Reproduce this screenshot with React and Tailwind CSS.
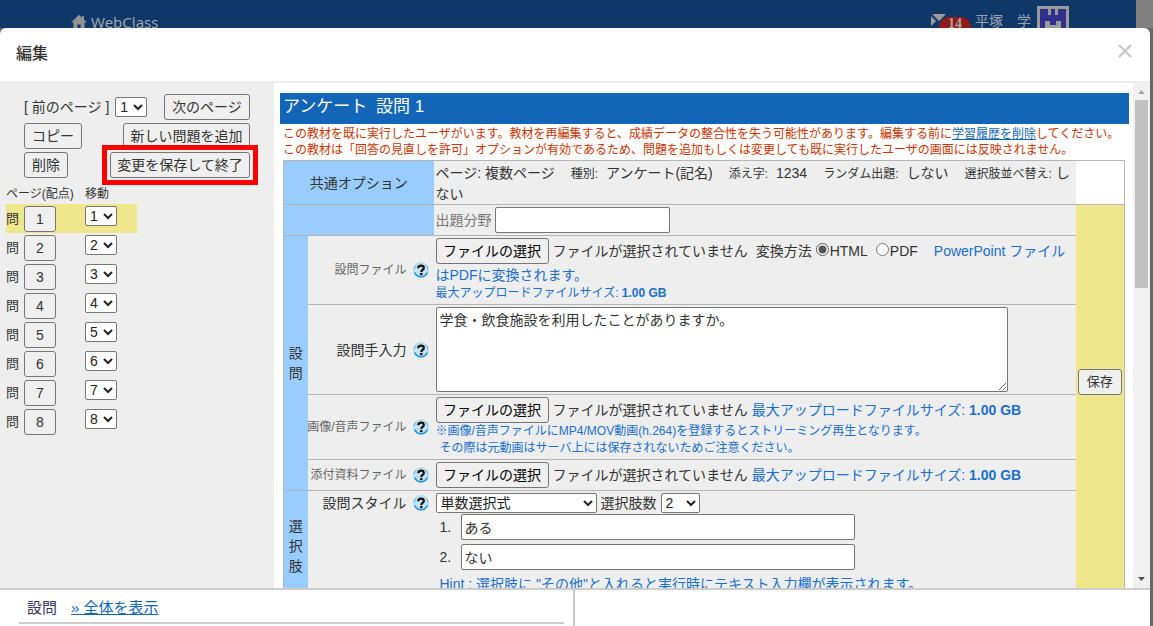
import React, { useState } from 'react';

const PAGES = [1, 2, 3, 4, 5, 6, 7, 8];
const NO_FILE = 'ファイルが選択されていません';

const buttonClass = 'h-[26px] shrink-0 rounded-[3px] border border-[#767676] bg-[#efefef] text-center whitespace-nowrap';
const selectClass = 'h-5 shrink-0 rounded-[2px] border border-[#767676] bg-white text-[#222]';
const inputClass = 'h-[26px] rounded-[2px] border border-[#767676] bg-white px-[3px]';

function HelpIcon() {
  return (
    <svg viewBox="0 0 16 16" className="h-4 w-4 shrink-0" aria-hidden="true">
      <circle cx="8" cy="8" r="7.4" fill="#c3e4f5" stroke="#b5d4e4" strokeWidth="1" />
      <path d="M1.6 10.5A7 7 0 0 0 14.4 10.5" fill="none" stroke="#2b9bd8" strokeWidth="1.8" />
      <path d="M1.2 7A7 7 0 0 1 3.4 2.8M14.8 7a7 7 0 0 0-2.2-4.2" fill="none" stroke="#5db4de" strokeWidth="1" />
      <path d="M5.2 6.3C5.3 4.4 6.4 3.6 8 3.6s2.8.9 2.8 2.3c0 2-2.5 2-2.5 4" fill="none" stroke="#111" strokeWidth="2.2" />
      <rect x="7.1" y="10.9" width="2.3" height="2.2" fill="#111" />
    </svg>
  );
}

function TopBar() {
  return (
    <header className="flex h-7 shrink-0 bg-[#808080]">
      <div className="mr-[17px] flex h-full flex-1 items-start justify-between overflow-hidden bg-[#0f3869] pr-[67px] pl-[71px] text-[#9aa3ad]">
        <a href="#home" className="mt-3 flex items-center gap-1 font-['Noto_Sans'] text-[15px] leading-5">
          <svg viewBox="0 0 16 16" className="h-4 w-4" fill="#929292" aria-hidden="true">
            <path d="M8 0.8 0 8.6h2.4V15h4v-4.6h3.2V15h4V8.6H16L13 5.7V2h-2v1.8z" />
          </svg>
          WebClass
        </a>
        <div className="flex items-start">
          <div className="mt-[14px] flex">
            <svg viewBox="0 0 16 14" className="h-[14px] w-4" aria-hidden="true">
              <path d="M1 0h14L8 7zM0 2l5 5-5 5z" fill="#9a9a9a" />
            </svg>
            <span className="-ml-2 mt-[3px] h-5 w-8 rounded-full bg-[#8f1a17] text-center font-['Liberation_Serif'] text-sm leading-[14px] font-bold text-[#a5a5a5]">14</span>
          </div>
          <span className="mt-[11px] ml-1 text-sm leading-5">平塚　学</span>
          <svg viewBox="0 0 32 32" className="mt-1.5 ml-1.5 h-8 w-8" aria-hidden="true">
            <rect width="32" height="32" fill="#9a9a9a" />
            <path d="M3 3h8v6h3V3h4v6h3V3h8v26H3z" fill="#2f2f8e" />
            <path d="M8 15h5v4h6v-4h5v14h-4v-6h-8v6H8z" fill="#9a9a9a" />
          </svg>
        </div>
      </div>
    </header>
  );
}

function Sidebar() {
  const [current, setCurrent] = useState(1);

  return (
    <aside className="w-[274px] shrink-0 bg-[#eee] text-sm leading-5">
      <div className="flex w-[250px] flex-col gap-[3px] pt-[11px] pl-6">
        <div className="flex items-center">
          <span>[ 前のページ ]</span>
          <select
            aria-label="ページ"
            value={current}
            onChange={(e) => setCurrent(Number(e.target.value))}
            className={`${selectClass} ml-1.5 w-8`}
          >
            {PAGES.map(page => <option key={page} value={page}>{page}</option>)}
          </select>
          <button className={`${buttonClass} ml-auto w-[86px]`}>次のページ</button>
        </div>
        <div className="flex justify-between">
          <button className={`${buttonClass} w-[58px]`}>コピー</button>
          <button className={`${buttonClass} w-[127px]`}>新しい問題を追加</button>
        </div>
        <div className="flex justify-between">
          <button className={`${buttonClass} w-11`}>削除</button>
          <div className="relative">
            <button className={`${buttonClass} w-[140px]`}>変更を保存して終了</button>
            <span className="pointer-events-none absolute -inset-x-2 -inset-y-[7px] border-5 border-[#f00]" />
          </div>
        </div>
      </div>
      <div className="mt-1.5 flex pl-1.5 text-xs leading-5">
        <span className="w-[79px]">ページ(配点)</span>
        <span>移動</span>
      </div>
      <ul className="ml-1.5 w-[131px]">
        {PAGES.map(page => (
          <li key={page} className={`flex h-[29px] items-start pt-0.5 ${page === current ? 'bg-[#f0e68c]' : ''}`}>
            <span className="mt-[3px] w-[18px] text-[13px]">問</span>
            <button onClick={() => setCurrent(page)} className={`${buttonClass} w-8`}>{page}</button>
            <select aria-label={`問${page}の移動先`} defaultValue={page} className={`${selectClass} ml-[29px] w-8`}>
              {PAGES.map(p => <option key={p} value={p}>{p}</option>)}
            </select>
          </li>
        ))}
      </ul>
    </aside>
  );
}

function FilePicker() {
  return (
    <>
      <button className={`${buttonClass} w-[113px] text-black`}>ファイルの選択</button>
      <span className="ml-1">{NO_FILE}</span>
    </>
  );
}

function RowLabel({ children, className = '' }) {
  return (
    <div className={`flex items-center justify-end gap-1.5 pr-[5px] whitespace-nowrap ${className}`}>
      {children}
      <HelpIcon />
    </div>
  );
}

function Option({ label, value }) {
  return (
    <>
      <span className="text-xs leading-5">{label}:</span>{' '}
      <span className="mr-4 ml-1">{value}</span>
    </>
  );
}

function QuestionTable() {
  return (
    <table className="w-full table-fixed border-collapse border border-[#b5b5b5] bg-[#eee] text-sm leading-5">
      <colgroup>
        <col className="w-6" />
        <col className="w-[126px]" />
        <col />
        <col className="w-[49px]" />
      </colgroup>
      <tbody>
        <tr className="h-11 border-b border-[#b5b5b5]">
          <th colSpan={2} className="bg-[#99ccff] font-normal">共通オプション</th>
          <td className="pt-0.5 pl-0.5 align-top">
            ページ: 複数ページ<span className="inline-block w-4" />
            <Option label="種別" value="アンケート(記名)" />
            <Option label="添え字" value="1234" />
            <Option label="ランダム出題" value="しない" />
            <span className="text-xs leading-5">選択肢並べ替え:</span> しない
          </td>
          <td className="bg-white" />
        </tr>
        <tr className="h-[31px]">
          <th colSpan={2} className="border-b border-[#b5b5b5] bg-[#99ccff]" />
          <td className="border-b border-[#b5b5b5] pl-0.5">
            <div className="flex items-center">
              <label htmlFor="field" className="mr-[3px] text-[#777]">出題分野</label>
              <input id="field" type="text" className={`${inputClass} w-[175px]`} />
            </div>
          </td>
          <td rowSpan={6} className="bg-[#f0e68c] pt-[164px] text-center align-top">
            <button className={`${buttonClass} w-11 text-[13px]`}>保存</button>
          </td>
        </tr>
        <tr className="h-[69px]">
          <th rowSpan={4} className="border-b border-[#b5b5b5] bg-[#99ccff] font-normal">設<br />問</th>
          <td className="border-b border-[#b5b5b5] text-xs text-[#666]"><RowLabel>設問ファイル</RowLabel></td>
          <td className="border-b border-[#b5b5b5] pt-0.5 pl-0.5 align-top">
            <div className="flex items-center whitespace-nowrap">
              <FilePicker />
              <span className="ml-2">変換方法</span>
              <input id="html" type="radio" name="convert" defaultChecked className="mr-px mb-1 ml-1 h-[13px] w-[13px] accent-[#555]" />
              <label htmlFor="html">HTML</label>
              <input id="pdf" type="radio" name="convert" className="mr-px mb-1 ml-2 h-[13px] w-[13px] accent-[#555]" />
              <label htmlFor="pdf">PDF</label>
              <span className="ml-4 text-[#1b6fd0]">PowerPoint ファイル</span>
            </div>
            <div className="leading-[22px] text-[#1b6fd0]">はPDFに変換されます。</div>
            <div className="text-xs leading-[14px] text-[#1b6fd0]">最大アップロードファイルサイズ: <b>1.00 GB</b></div>
          </td>
        </tr>
        <tr className="h-[90px]">
          <td className="border-b border-[#b5b5b5]"><RowLabel><label htmlFor="question">設問手入力</label></RowLabel></td>
          <td className="border-b border-[#b5b5b5] pl-0.5">
            <textarea
              id="question"
              defaultValue="学食・飲食施設を利用したことがありますか。"
              className="block h-[85px] w-[572px] resize rounded-[2px] border border-[#767676] bg-white px-[3px] py-0.5"
            />
          </td>
        </tr>
        <tr className="h-[65px]">
          <td className="border-b border-[#b5b5b5] text-xs text-[#666]"><RowLabel>画像/音声ファイル</RowLabel></td>
          <td className="border-b border-[#b5b5b5] pl-0.5">
            <div className="flex items-center whitespace-nowrap">
              <FilePicker />
              <span className="ml-1 text-[#1b6fd0]">最大アップロードファイルサイズ: <b>1.00 GB</b></span>
            </div>
            <div className="text-xs leading-[17px] text-[#1b6fd0]">※画像/音声ファイルにMP4/MOV動画(h.264)を登録するとストリーミング再生となります。</div>
            <div className="pl-1 text-xs leading-[17px] text-[#1b6fd0]">その際は元動画はサーバ上には保存されないためご注意ください。</div>
          </td>
        </tr>
        <tr className="h-[31px]">
          <td className="border-b border-[#b5b5b5] text-xs text-[#666]"><RowLabel>添付資料ファイル</RowLabel></td>
          <td className="border-b border-[#b5b5b5] pl-0.5">
            <div className="flex items-center whitespace-nowrap">
              <FilePicker />
              <span className="ml-1 text-[#1b6fd0]">最大アップロードファイルサイズ: <b>1.00 GB</b></span>
            </div>
          </td>
        </tr>
        <tr className="h-[110px]">
          <th className="bg-[#99ccff] font-normal">選<br />択<br />肢</th>
          <td className="pt-0.5 align-top"><RowLabel><label htmlFor="style">設問スタイル</label></RowLabel></td>
          <td className="pt-0.5 pl-0.5 align-top">
            <div className="flex items-center">
              <select id="style" defaultValue="単数選択式" className={`${selectClass} w-[161px]`}>
                <option>単数選択式</option>
                <option>複数選択式</option>
              </select>
              <label htmlFor="count" className="mx-1">選択肢数</label>
              <select id="count" defaultValue="2" className={`${selectClass} w-[39px]`}>
                <option>2</option>
                <option>3</option>
                <option>4</option>
              </select>
            </div>
            {['ある', 'ない'].map((choice, i) => (
              <div key={choice} className="mt-px mb-1 flex items-center pl-1">
                <label htmlFor={`choice${i}`} className="w-[21px]">{i + 1}.</label>
                <input id={`choice${i}`} type="text" defaultValue={choice} className={`${inputClass} w-[394px]`} />
              </div>
            ))}
            <div className="pl-1 whitespace-nowrap text-[#1b6fd0]">Hint : 選択肢に "その他"と入れると実行時にテキスト入力欄が表示されます。</div>
          </td>
        </tr>
      </tbody>
    </table>
  );
}

function Scrollbar() {
  return (
    <div className="flex w-[17px] shrink-0 flex-col items-center bg-[#f1f1f1]">
      <svg viewBox="0 0 17 17" className="h-[17px] w-[17px]" aria-hidden="true"><path d="M5 11h7L8.500 7z" fill="#a3a3a3" /></svg>
      <div className="w-[13px] flex-2 bg-[#c1c1c1]" />
      <div className="flex-3" />
      <svg viewBox="0 0 17 17" className="h-[17px] w-[17px]" aria-hidden="true"><path d="M5 6h7L8.500 10z" fill="#505050" /></svg>
    </div>
  );
}

function App() {
  return (
    <div className="flex h-screen flex-col overflow-hidden bg-[#0f3869] font-['Liberation_Sans','Noto_Sans_CJK_JP',sans-serif] text-[#333]">
      <TopBar />
      <div className="flex min-h-0 flex-1 bg-[#666]">
        <div role="dialog" aria-labelledby="title" className="mr-[3px] flex min-w-0 flex-1 flex-col overflow-hidden rounded-t-md bg-white">
          <div className="flex h-[55px] shrink-0 items-start justify-between border-b-2 border-[#eee] pt-3 pr-[18px] pl-4">
            <h1 id="title" className="pt-1 text-base leading-5 font-medium">編集</h1>
            <button aria-label="閉じる" className="pt-1">
              <svg viewBox="0 0 14 14" className="h-[14px] w-[14px]" stroke="#c8c8c8" strokeWidth="2.4" aria-hidden="true"><path d="m1 1 12 12M13 1 1 13" /></svg>
            </button>
          </div>
          <div className="flex min-h-0 flex-1 overflow-hidden">
            <Sidebar />
            <main className="min-w-0 flex-1 pt-2.5 pr-1 pl-1.5">
              <h2 className="mb-0.5 h-[31px] bg-[#1366b7] pl-[3px] text-[17px] leading-7 text-white"><span className="mr-1">アンケート</span> 設問 1</h2>
              <div className="pl-[3px] text-xs leading-4 whitespace-nowrap text-[#cc3300]">
                <p>この教材を既に実行したユーザがいます。教材を再編集すると、成績データの整合性を失う可能性があります。編集する前に<a href="#history" className="text-[#1366b7] underline">学習履歴を削除</a>してください。</p>
                <p>この教材は「回答の見直しを許可」オプションが有効であるため、問題を追加もしくは変更しても既に実行したユーザの画面には反映されません。</p>
              </div>
              <div className="mt-0.5 mr-1 ml-[3px]">
                <QuestionTable />
              </div>
            </main>
            <Scrollbar />
          </div>
          <footer className="flex h-[38px] shrink-0 border-t-2 border-[#ccc]">
            <div className="w-1/2 border-r-2 border-[#ccc] pr-[9px] pl-[19px]">
              <div className="flex h-[34px] items-end gap-[14px] border-b-2 border-[#ccc] pb-0.5 pl-2 text-[15px] leading-6">
                <span className="text-[#3b3566]">設問</span>
                <a href="#all" className="text-[#1366b7] underline">» 全体を表示</a>
              </div>
            </div>
          </footer>
        </div>
      </div>
    </div>
  );
}

export default App;
